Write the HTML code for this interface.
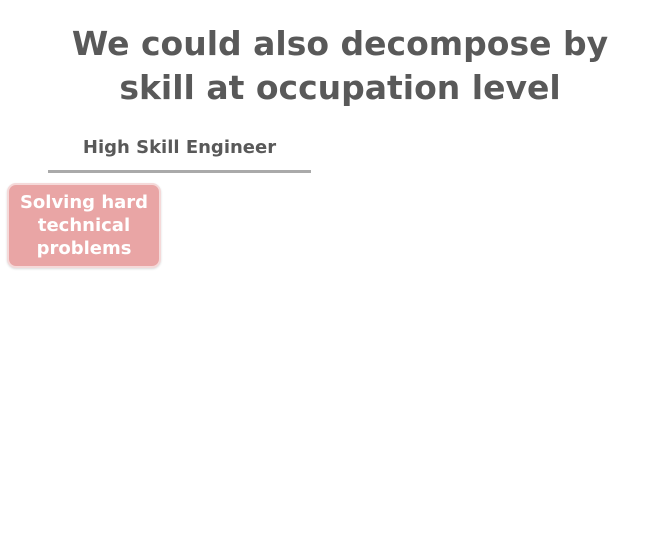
<!DOCTYPE html>
<html><head><style>
body{margin:0;width:663px;height:535px;background:#fff;position:relative;overflow:hidden;font-family:"DejaVu Sans","Liberation Sans",sans-serif;font-weight:bold}
.t{position:absolute;left:0;width:680px;text-align:center;top:22px;font-size:33px;line-height:44px;color:#595959}
.s{position:absolute;left:48px;width:263px;text-align:center;top:137px;font-size:18px;color:#595959}
.l{position:absolute;left:48px;top:170px;width:263px;height:3px;background:#aaa}
.b{position:absolute;left:7px;top:183px;width:150px;height:75px;background:#e9a5a5;border:2px solid #f5d9d9;border-radius:9px;color:#fff;text-align:center;font-size:18px;line-height:23px;padding-top:6px;box-sizing:content-box;box-shadow:0 1px 2px rgba(0,0,0,.15)}
</style></head><body>
<div class="t">We could also decompose by<br>skill at occupation level</div>
<div class="s">High Skill Engineer</div>
<div class="l"></div>
<div class="b">Solving hard<br>technical<br>problems</div>
</body></html>
